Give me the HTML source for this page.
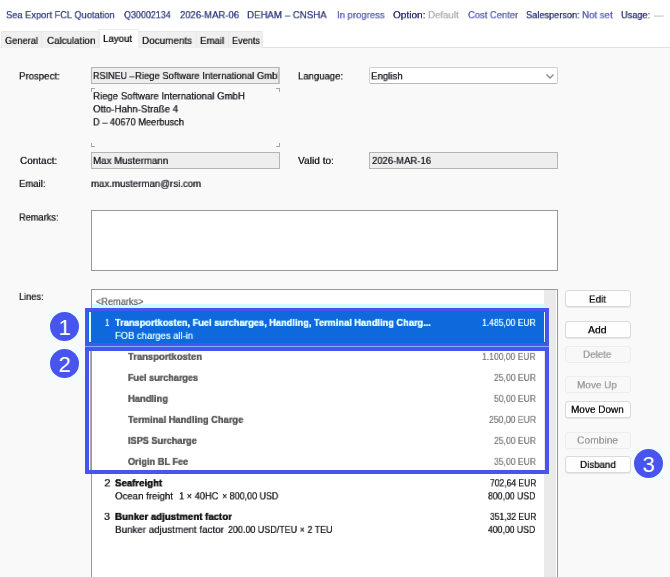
<!DOCTYPE html>
<html><head><meta charset="utf-8"><title>Sea Export FCL Quotation</title>
<style>
*{box-sizing:border-box;margin:0;padding:0}
html,body{width:670px;height:577px;overflow:hidden;background:#f9f9f9}
body{position:relative;font-family:"Liberation Sans",sans-serif;font-size:10px;color:#222228;line-height:14px}
.a{position:absolute}
.t{position:absolute;white-space:pre;transform-origin:0 0;line-height:14px;height:14px;will-change:transform;text-shadow:0 0 0.5px currentColor}
.tab{position:absolute;top:31px;height:17px;background:#f0f0f0;border:1px solid #e9e9e9;border-bottom:none}
.tab.sel{top:29px;height:19px;background:#fdfdfd;border:1px solid #ececec;border-bottom:none}
.inp{position:absolute;height:17px;border:1px solid #b4b4b4;background:#fff;overflow:hidden}
.inp.ro{background:#eeeeee}
.btn{position:absolute;left:565px;width:66px;height:17px;border:1px solid #dadada;border-radius:3px;background:#fefefe;box-shadow:0 1px 0 #e8e8e8}
.btn.dis{border-color:#eeeeee;background:#f8f8f8;box-shadow:none}
.circ{position:absolute;width:29px;height:29px;border-radius:50%;background:#4755ee;color:#fff;font-size:22px;line-height:31px;text-align:center}
</style></head><body>
<div class="a" style="left:0;top:0;width:670px;height:47px;background:#fff"></div>
<div class="a" style="left:0;top:47px;width:670px;height:1px;background:#e2e2e2"></div>
<div class="tab" style="left:1px;width:41px"></div>
<div class="tab" style="left:41px;width:58px"></div>
<div class="tab" style="left:138px;width:59px"></div>
<div class="tab" style="left:196px;width:33px"></div>
<div class="tab" style="left:228px;width:35px"></div>
<div class="tab sel" style="left:99px;width:40px"></div>

<div class="inp ro" style="left:91px;top:67px;width:189px;border-right-width:2px;border-right-color:#c4c4c4"><span class="t" style="left:1.3px;top:2px;transform:translateY(0.1px) scale(0.90,0.9)">RSINEU –</span><span class="t" style="left:42.6px;top:2px;transform:translateY(0.1px) scale(0.945,0.9)">Riege Software International GmbH</span></div>
<div class="inp" style="left:369px;top:67px;width:189px;border-color:#d0d0d0 #d0d0d0 #b8b8b8 #d0d0d0;border-radius:2px"></div>
<svg class="a" style="left:545px;top:73px" width="10" height="7" viewBox="0 0 10 7"><path d="M1.5 1.5 L5 5 L8.5 1.5" fill="none" stroke="#888" stroke-width="1.3"/></svg>
<div class="inp ro" style="left:91px;top:152px;width:189px"></div>
<div class="inp ro" style="left:369px;top:152px;width:189px"></div>
<!-- corner marks -->
<div class="a" style="left:91px;top:88px;width:4px;height:4px;border-left:1px solid #a8a8a8;border-top:1px solid #a8a8a8"></div>
<div class="a" style="left:276px;top:88px;width:4px;height:4px;border-right:1px solid #a8a8a8;border-top:1px solid #a8a8a8"></div>
<div class="a" style="left:91px;top:143px;width:4px;height:4px;border-left:1px solid #a8a8a8;border-bottom:1px solid #a8a8a8"></div>
<div class="a" style="left:276px;top:143px;width:4px;height:4px;border-right:1px solid #a8a8a8;border-bottom:1px solid #a8a8a8"></div>

<div class="a" style="left:91px;top:210px;width:467px;height:61px;border:1px solid #999;background:#fff"></div>
<div class="a" style="left:91px;top:289px;width:467px;height:300px;border:1px solid #999;background:#fff"></div>
<div class="a" style="left:544px;top:290px;width:12px;height:290px;background:#eaeaea"></div>
<div class="a" style="left:92px;top:304px;width:453px;height:5px;background:#d4fbfb"></div>

<div class="a" style="left:85px;top:308px;width:464px;height:38px;background:#0d69dc;border:3px solid #4755ee"></div>
<div class="a" style="left:85px;top:346px;width:464px;height:1px;background:#7fb0fa"></div>
<div class="a" style="left:89px;top:312px;width:2px;height:30px;background:#e8ffff"></div>
<div class="a" style="left:544px;top:312px;width:1px;height:30px;background:#e8ffff"></div>

<div class="a" style="left:85px;top:347px;width:464px;height:127px;border:4px solid #4755ee"></div>
<div class="a" style="left:90px;top:351px;width:1px;height:119px;background:#aaa"></div>
<div class="btn" style="top:290px"></div>
<div class="btn" style="top:321px"></div>
<div class="btn dis" style="top:346px"></div>
<div class="btn dis" style="top:376px"></div>
<div class="btn" style="top:401px"></div>
<div class="btn dis" style="top:432px"></div>
<div class="btn" style="top:456px"></div>
<span class="t" style="left:5.9px;top:9px;color:#34407f;transform:translateY(0.3px) scale(0.9296,0.9);">Sea Export FCL Quotation</span>
<span class="t" style="left:123.6px;top:9px;color:#34407f;transform:translateY(0.3px) scale(0.8932,0.9);">Q30002134</span>
<span class="t" style="left:179.5px;top:9px;color:#34407f;transform:translateY(0.3px) scale(0.9469,0.9);">2026-MAR-06</span>
<span class="t" style="left:247.3px;top:9px;color:#34407f;transform:translateY(0.3px) scale(0.9693,0.9);">DEHAM – CNSHA</span>
<span class="t" style="left:336.6px;top:9px;color:#5a5eb8;transform:translateY(0.3px) scale(0.9518,0.9);">In progress</span>
<span class="t" style="left:392.5px;top:9px;color:#2b316f;transform:translateY(0.3px) scale(1.0081,0.9);">Option:</span>
<span class="t" style="left:428.3px;top:9px;color:#b0b0b0;transform:translateY(0.3px) scale(0.9677,0.9);">Default</span>
<span class="t" style="left:467.5px;top:9px;color:#5a5eb8;transform:translateY(0.3px) scale(0.9403,0.9);">Cost Center</span>
<span class="t" style="left:525.5px;top:9px;color:#2b316f;transform:translateY(0.3px) scale(0.9193,0.9);">Salesperson:</span>
<span class="t" style="left:582.3px;top:9px;color:#5a5eb8;transform:translateY(0.3px) scale(0.9677,0.9);">Not set</span>
<span class="t" style="left:621.3px;top:9px;color:#2b316f;transform:translateY(0.3px) scale(0.9200,0.9);">Usage:</span>
<span class="t" style="left:654.0px;top:9px;color:#b0b0b0;transform:translateY(0.3px) scale(0.9600,0.9);">—</span>
<span class="t" style="left:4.5px;top:35px;color:#222;transform:translateY(0.0px) scale(0.9275,0.9);">General</span>
<span class="t" style="left:46.5px;top:35px;color:#222;transform:translateY(0.0px) scale(0.9773,0.9);">Calculation</span>
<span class="t" style="left:102.9px;top:33px;color:#111;transform:translateY(0.0px) scale(0.9709,0.9);">Layout</span>
<span class="t" style="left:142.3px;top:35px;color:#222;transform:translateY(0.0px) scale(0.9899,0.9);">Documents</span>
<span class="t" style="left:200.3px;top:35px;color:#222;transform:translateY(0.0px) scale(0.9684,0.9);">Email</span>
<span class="t" style="left:232.3px;top:35px;color:#222;transform:translateY(0.0px) scale(0.9153,0.9);">Events</span>
<span class="t" style="left:19.3px;top:70px;color:#222228;transform:translateY(0.4px) scale(0.9630,0.9);">Prospect:</span>
<span class="t" style="left:92.6px;top:90px;color:#222228;transform:translateY(0.4px) scale(0.9619,0.9);">Riege Software International GmbH</span>
<span class="t" style="left:92.8px;top:103px;color:#222228;transform:translateY(0.4px) scale(0.9690,0.9);">Otto-Hahn-Straße 4</span>
<span class="t" style="left:92.6px;top:116px;color:#222228;transform:translateY(0.4px) scale(0.9247,0.9);">D – 40670 Meerbusch</span>
<span class="t" style="left:297.7px;top:70px;color:#222228;transform:translateY(0.4px) scale(0.9530,0.9);">Language:</span>
<span class="t" style="left:371.3px;top:70px;color:#222228;transform:translateY(0.4px) scale(0.9651,0.9);">English</span>
<span class="t" style="left:19.5px;top:155px;color:#222228;transform:translateY(0.0px) scale(0.9958,0.9);">Contact:</span>
<span class="t" style="left:93.3px;top:155px;color:#222228;transform:translateY(0.0px) scale(0.9737,0.9);">Max Mustermann</span>
<span class="t" style="left:298.0px;top:155px;color:#222228;transform:translateY(0.0px) scale(1.0145,0.9);">Valid to:</span>
<span class="t" style="left:371.5px;top:155px;color:#222228;transform:translateY(0.0px) scale(0.9469,0.9);">2026-MAR-16</span>
<span class="t" style="left:19.3px;top:178px;color:#222228;transform:translateY(0.0px) scale(0.9524,0.9);">Email:</span>
<span class="t" style="left:90.9px;top:178px;color:#222228;transform:translateY(0.0px) scale(0.9650,0.9);">max.musterman@rsi.com</span>
<span class="t" style="left:19.3px;top:211px;color:#222228;transform:translateY(0.6px) scale(0.9212,0.9);">Remarks:</span>
<span class="t" style="left:19.3px;top:291px;color:#222228;transform:translateY(0.0px) scale(0.9200,0.9);">Lines:</span>
<span class="t" style="left:96.2px;top:295px;color:#6a6a6a;transform:translateY(0.9px) scale(0.9202,0.9);">&lt;Remarks&gt;</span>
<span class="t" style="left:105.0px;top:317px;color:#e4ffff;transform:translateY(0.0px) scale(0.8000,0.9);">1</span>
<span class="t" style="left:115.1px;top:317px;color:#e4ffff;transform:translateY(0.0px) scale(0.9249,0.9);font-weight:bold;-webkit-text-stroke:0.2px currentColor;">Transportkosten, Fuel surcharges, Handling, Terminal Handling Charg...</span>
<span class="t" style="left:114.9px;top:330px;color:#e4ffff;transform:translateY(0.0px) scale(0.9423,0.9);">FOB charges all-in</span>
<span class="t" style="left:482.4px;top:317px;color:#e4ffff;transform:translateY(0.0px) scale(0.8569,0.9);">1.485,00 EUR</span>
<span class="t" style="left:128.1px;top:351px;color:#5a5a5a;transform:translateY(0.0px) scale(0.9441,0.9);font-weight:bold;-webkit-text-stroke:0.2px currentColor;">Transportkosten</span>
<span class="t" style="left:482.4px;top:351px;color:#808080;transform:translateY(0.0px) scale(0.8553,0.9);">1.100,00 EUR</span>
<span class="t" style="left:127.9px;top:372px;color:#5a5a5a;transform:translateY(0.0px) scale(0.9049,0.9);font-weight:bold;-webkit-text-stroke:0.2px currentColor;">Fuel surcharges</span>
<span class="t" style="left:494.0px;top:372px;color:#808080;transform:translateY(0.0px) scale(0.8583,0.9);">25,00 EUR</span>
<span class="t" style="left:127.9px;top:393px;color:#5a5a5a;transform:translateY(0.0px) scale(0.9349,0.9);font-weight:bold;-webkit-text-stroke:0.2px currentColor;">Handling</span>
<span class="t" style="left:494.0px;top:393px;color:#808080;transform:translateY(0.0px) scale(0.8583,0.9);">50,00 EUR</span>
<span class="t" style="left:128.1px;top:414px;color:#5a5a5a;transform:translateY(0.0px) scale(0.9312,0.9);font-weight:bold;-webkit-text-stroke:0.2px currentColor;">Terminal Handling Charge</span>
<span class="t" style="left:489.0px;top:414px;color:#808080;transform:translateY(0.0px) scale(0.8636,0.9);">250,00 EUR</span>
<span class="t" style="left:127.9px;top:435px;color:#5a5a5a;transform:translateY(0.0px) scale(0.9162,0.9);font-weight:bold;-webkit-text-stroke:0.2px currentColor;">ISPS Surcharge</span>
<span class="t" style="left:494.0px;top:435px;color:#808080;transform:translateY(0.0px) scale(0.8583,0.9);">25,00 EUR</span>
<span class="t" style="left:128.1px;top:456px;color:#5a5a5a;transform:translateY(0.0px) scale(0.9209,0.9);font-weight:bold;-webkit-text-stroke:0.2px currentColor;">Origin BL Fee</span>
<span class="t" style="left:494.0px;top:456px;color:#808080;transform:translateY(0.0px) scale(0.8583,0.9);">35,00 EUR</span>
<span class="t" style="left:103.8px;top:477px;color:#222228;transform:translateY(0.4px) scale(1.1556,0.9);">2</span>
<span class="t" style="left:115.4px;top:477px;color:#111;transform:translateY(0.4px) scale(0.9649,0.9);font-weight:bold;-webkit-text-stroke:0.2px currentColor;">Seafreight</span>
<span class="t" style="left:115.1px;top:490px;color:#222228;transform:translateY(0.4px) scale(0.9647,0.9);">Ocean freight</span>
<span class="t" style="left:178.7px;top:490px;color:#222228;transform:translateY(0.4px) scale(0.9261,0.9);">1 × 40HC</span>
<span class="t" style="left:222.3px;top:490px;color:#222228;transform:translateY(0.4px) scale(0.8935,0.9);">× 800,00 USD</span>
<span class="t" style="left:489.6px;top:477px;color:#222228;transform:translateY(0.4px) scale(0.8523,0.9);">702,64 EUR</span>
<span class="t" style="left:488.2px;top:490px;color:#222228;transform:translateY(0.4px) scale(0.8710,0.9);">800,00 USD</span>
<span class="t" style="left:103.9px;top:511px;color:#222228;transform:translateY(0.0px) scale(1.0947,0.9);">3</span>
<span class="t" style="left:114.9px;top:511px;color:#111;transform:translateY(0.0px) scale(0.9647,0.9);font-weight:bold;-webkit-text-stroke:0.2px currentColor;">Bunker adjustment factor</span>
<span class="t" style="left:114.9px;top:524px;color:#222228;transform:translateY(0.0px) scale(0.9796,0.9);">Bunker adjustment factor</span>
<span class="t" style="left:228.2px;top:524px;color:#222228;transform:translateY(0.0px) scale(0.8952,0.9);">200.00 USD/TEU × 2 TEU</span>
<span class="t" style="left:489.6px;top:511px;color:#222228;transform:translateY(0.0px) scale(0.8523,0.9);">351,32 EUR</span>
<span class="t" style="left:488.4px;top:524px;color:#222228;transform:translateY(0.0px) scale(0.8670,0.9);">400,00 USD</span>
<span class="t" style="left:588.5px;top:293px;color:#111;transform:translateY(0.6px) scale(0.9758,0.9);">Edit</span>
<span class="t" style="left:588.3px;top:324px;color:#111;transform:translateY(0.3px) scale(1.0377,0.9);">Add</span>
<span class="t" style="left:583.3px;top:348px;color:#9a9a9a;transform:translateY(0.8px) scale(0.9838,0.9);">Delete</span>
<span class="t" style="left:577.1px;top:379px;color:#9a9a9a;transform:translateY(0.3px) scale(0.9935,0.9);">Move Up</span>
<span class="t" style="left:570.9px;top:403px;color:#111;transform:translateY(0.8px) scale(0.9981,0.9);">Move Down</span>
<span class="t" style="left:577.3px;top:434px;color:#9a9a9a;transform:translateY(0.6px) scale(1.0256,0.9);">Combine</span>
<span class="t" style="left:579.8px;top:459px;color:#111;transform:translateY(0.0px) scale(0.9759,0.9);">Disband</span>
<div class="a" style="left:48px;top:310px;width:33px;height:33px;background:#f3fcfc"></div>
<div class="a" style="left:48px;top:347px;width:33px;height:33px;background:#f3fcfc"></div>
<div class="a" style="left:632px;top:447px;width:33px;height:33px;background:#f3fcfc"></div>
<div class="circ" style="left:50px;top:312px">1</div>
<div class="circ" style="left:50px;top:349px">2</div>
<div class="circ" style="left:634px;top:449px">3</div>
</body></html>
